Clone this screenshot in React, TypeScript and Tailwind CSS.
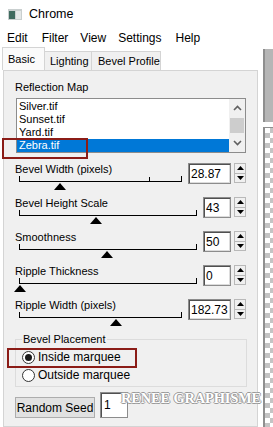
import React from "react";

const font = "font-['Liberation_Sans',Arial,sans-serif]";

function Thumb({ x }: { x: number }) {
  return (
    <svg
      className="absolute top-[1px]"
      style={{ left: x - 6 }}
      width="12"
      height="7"
      viewBox="0 0 12 7"
    >
      <polygon points="6,0 12,7 0,7" fill="#000" />
    </svg>
  );
}

function Spinner() {
  return (
    <div className="flex h-[20px] w-[12px] flex-col border border-[#b9b9b9] bg-[#f0f0f0]">
      <div className="flex flex-1 items-center justify-center border-b border-[#b9b9b9]">
        <svg width="7" height="4" viewBox="0 0 7 4">
          <polygon points="3.5,0 7,4 0,4" fill="#000" />
        </svg>
      </div>
      <div className="flex flex-1 items-center justify-center">
        <svg width="7" height="4" viewBox="0 0 7 4">
          <polygon points="0,0 7,0 3.5,4" fill="#000" />
        </svg>
      </div>
    </div>
  );
}

function NumInput({ value, wide }: { value: string; wide: boolean }) {
  return (
    <div
      className={
        (wide ? "w-[43px]" : "w-[28px]") +
        " flex h-[21px] items-center border border-[#8c8c8c] bg-white pl-[2px] text-[12px] text-black shadow-[inset_1px_1px_0_#505050,inset_-1px_-1px_0_#dcdcdc]"
      }
    >
      {value}
    </div>
  );
}

function SliderRow({
  label,
  value,
  wide,
  thumb,
  midTick,
}: {
  label: string;
  value: string;
  wide: boolean;
  thumb: number;
  midTick?: number;
}) {
  const trackW = wide ? 162 : 177;
  return (
    <div className="flex h-[34px] w-[231px] items-start justify-between">
      <div className="flex flex-col">
        <div className="h-[13px] text-[11px] leading-[13px] text-black">{label}</div>
        <div
          className="relative ml-[4px] h-[6px] border-b border-l border-r border-black"
          style={{ width: trackW + 1 }}
        >
          {midTick !== undefined && (
            <div className="absolute bottom-0 h-[4px] w-[1px] bg-black" style={{ left: midTick }} />
          )}
        </div>
        <div className="relative ml-[4px] h-[8px]">
          <Thumb x={thumb} />
        </div>
      </div>
      <div className="flex items-start gap-[3px]">
        <NumInput value={value} wide={wide} />
        <Spinner />
      </div>
    </div>
  );
}

function Chevron({ up }: { up: boolean }) {
  return (
    <svg width="9" height="6" viewBox="0 0 9 6">
      <polyline
        points={up ? "1,5 4.5,1.5 8,5" : "1,1 4.5,4.5 8,1"}
        fill="none"
        stroke="#606060"
        strokeWidth="1.6"
      />
    </svg>
  );
}

function Radio({ checked, label }: { checked: boolean; label: string }) {
  return (
    <div className="flex h-[18px] items-center pl-[6px]">
      <div className="flex h-[13px] w-[13px] items-center justify-center rounded-full border border-[#333] bg-white">
        {checked && <div className="h-[7px] w-[7px] rounded-full bg-[#1a1a1a]" />}
      </div>
      <span className="ml-[3px] text-[12px] leading-[13px] text-black">{label}</span>
    </div>
  );
}

export default function App() {
  return (
    <div className={`${font} relative h-[427px] w-[273px] overflow-hidden bg-white`}>
      {/* Title bar */}
      <div className="flex h-[28px] items-center pl-[8px]">
        <svg width="14" height="11" viewBox="0 0 14 11">
          <rect x="0" y="0" width="14" height="11" fill="#c9cfcf" />
          <rect x="1" y="2" width="6" height="8" fill="#3f6b5f" />
          <rect x="8" y="2" width="5" height="8" fill="#e4e8e8" />
        </svg>
        <span className="ml-[7px] text-[12.5px] text-black">Chrome</span>
      </div>
      {/* Menu bar */}
      <div className="flex h-[20px] items-center text-[12px] text-black">
        <span className="ml-[7px]">Edit</span>
        <span className="ml-[14px]">Filter</span>
        <span className="ml-[12px]">View</span>
        <span className="ml-[12px]">Settings</span>
        <span className="ml-[14px]">Help</span>
      </div>
      {/* Body */}
      <div className="flex h-[379px]">
        <div className="flex w-[263px] flex-col">
          {/* Tabs */}
          <div className="relative z-10 flex h-[22px] items-end pl-[2px] text-[11px] text-black">
            <div className="flex h-[23px] w-[43px] items-start border border-b-0 border-[#d4d4d4] bg-[#fafafa] pl-[5px] pt-[3px]">
              Basic
            </div>
            <div className="mb-[-1px] flex h-[20px] w-[47px] items-center border border-l-0 border-[#d4d4d4] bg-[#f0f0f0] pl-[5px]">
              Lighting
            </div>
            <div className="mb-[-1px] flex h-[20px] w-[69px] items-center border border-l-0 border-[#d4d4d4] bg-[#f0f0f0] pl-[6px]">
              Bevel Profile
            </div>
          </div>
          {/* Panel */}
          <div className="ml-[3px] flex w-[255px] flex-1 flex-col border border-[#d4d4d4] bg-[#f0f0f0] pl-[11px]">
            <div className="mt-[10px] h-[13px] text-[11px] leading-[13px] text-black">Reflection Map</div>
            <div className="ml-[1px] mt-[4px] flex h-[55px] w-[230px] border border-[#8c8c8c] bg-white">
              <div className="flex flex-1 flex-col pt-[1px] text-[11px] leading-[13px] text-black">
                <div className="h-[13px] pl-[2px]">Silver.tif</div>
                <div className="h-[13px] pl-[2px]">Sunset.tif</div>
                <div className="h-[13px] pl-[2px]">Yard.tif</div>
                <div className="h-[13px] bg-[#0078d7] pl-[2px] text-white">Zebra.tif</div>
              </div>
              <div className="flex w-[16px] flex-col bg-[#f0f0f0]">
                <div className="flex h-[17px] items-center justify-center">
                  <Chevron up={true} />
                </div>
                <div className="mx-[1px] mt-[2px] h-[15px] bg-[#cdcdcd]" />
                <div className="flex flex-1 items-center justify-center">
                  <Chevron up={false} />
                </div>
              </div>
            </div>

            <div className="mt-[10px] flex flex-col">
              <SliderRow label="Bevel Width (pixels)" value="28.87" wide={true} thumb={41} midTick={129} />
              <SliderRow label="Bevel Height Scale" value="43" wide={false} thumb={77} />
              <SliderRow label="Smoothness" value="50" wide={false} thumb={88} />
              <SliderRow label="Ripple Thickness" value="0" wide={false} thumb={1} />
              <SliderRow label="Ripple Width (pixels)" value="182.73" wide={true} thumb={97} />
            </div>

            <fieldset className="w-[232px] border border-[#dcdcdc] pb-[2px] pt-[2px]">
              <legend className="ml-[6px] px-[1px] text-[11px] leading-[13px] text-black">Bevel Placement</legend>
              <Radio checked={true} label="Inside marquee" />
              <Radio checked={false} label="Outside marquee" />
            </fieldset>

            <div className="mt-[5px] flex items-end gap-[5px]">
              <div className="flex h-[21px] w-[80px] items-center justify-center border border-[#adadad] bg-[#e1e1e1] text-[12px] text-black">
                Random Seed
              </div>
              <div className="flex h-[26px] w-[28px] items-center border border-[#8c8c8c] bg-white pl-[3px] text-[12px] text-black shadow-[inset_1px_1px_0_#505050]">
                1
              </div>
            </div>
          </div>
        </div>
        {/* Right strip */}
        <div className="flex w-[10px] flex-col bg-white pt-[1px]">
          <div className="h-[73px] border-l-2 border-[#8f8f8f] bg-[#b6b6b6]" />
          <div className="h-[5px]" />
          <div className="flex-1 border-l-2 border-t border-[#8f8f8f] bg-white [background-image:repeating-conic-gradient(#c4c4c4_0_25%,#ffffff_0_50%)] [background-size:10px_10px]" />
        </div>
      </div>

      {/* Annotation boxes */}
      <div className="absolute left-[2px] top-[138px] h-[21px] w-[86px] border-2 border-[#8b1c17]" />
      <div className="absolute left-[7px] top-[348px] h-[20px] w-[130px] border-2 border-[#8b1c17]" />

      {/* Watermark */}
      <div className="absolute left-[121px] top-[391px] font-['Liberation_Serif',serif] text-[14.5px] font-bold leading-[15px] tracking-[-0.2px] text-white [text-shadow:1px_0_0_#9a9a9a,-1px_0_0_#9a9a9a,0_1px_0_#9a9a9a,0_-1px_0_#9a9a9a]">
        RENEE GRAPHISME
      </div>
    </div>
  );
}
